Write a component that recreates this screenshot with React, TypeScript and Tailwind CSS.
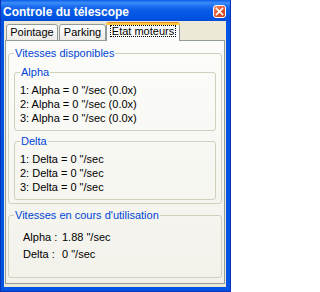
import React from "react";

const font = { fontFamily: '"Liberation Sans", Arial, sans-serif' };

const alphaRows = ["1: Alpha = 0 \"/sec (0.0x)", "2: Alpha = 0 \"/sec (0.0x)", "3: Alpha = 0 \"/sec (0.0x)"];
const deltaRows = ["1: Delta = 0 \"/sec", "2: Delta = 0 \"/sec", "3: Delta = 0 \"/sec"];

function CloseButton() {
  return (
    <div className="mt-[5px] w-[13px] h-[13px] rounded-[3px] border border-white bg-[linear-gradient(135deg,#f0937a_0%,#e3582f_45%,#c8401a_100%)] flex items-center justify-center">
      <svg width="11" height="11" viewBox="0 0 11 11">
        <path d="M2.5 2.5 L8.5 8.5 M8.5 2.5 L2.5 8.5" stroke="#fff" strokeWidth="1.7" strokeLinecap="square" />
      </svg>
    </div>
  );
}

function Group({ label, children, className = "" }: { label: string; children: React.ReactNode; className?: string }) {
  return (
    <fieldset className={`border border-[#d0d0bf] rounded-[3px] px-[5px] ${className}`}>
      <legend className="px-[1px] text-[11px] leading-[13px] text-[#0046d5]">{label}</legend>
      {children}
    </fieldset>
  );
}

export default function App() {
  return (
    <div
      style={font}
      className="w-[231px] h-[292px] flex flex-col bg-[#0054e3] border border-[#0a33b8] border-t-0 text-black overflow-hidden"
    >
      {/* caption */}
      <div className="h-[21px] -mx-px flex items-start justify-between pl-[3px] pr-[5px] bg-[linear-gradient(to_bottom,#0a5ce8_0%,#3d8ef8_14%,#1f70f2_28%,#0a5be6_50%,#0054e3_80%,#004bd9_100%)]">
        <span className="pt-[5px] text-[12px] leading-[15px] font-bold text-white">Controle du télescope</span>
        <CloseButton />
      </div>

      {/* body */}
      <div className="flex-1 ml-[3px] mr-[4px] mb-[4px] bg-[#ece9d8] pt-px pb-[3px] flex flex-col">
        <div className="h-[19px] pl-[2px] flex items-end text-[11px]">
          <div className="w-[52px] h-[17px] border border-[#919b9c] rounded-t-[3px] bg-[linear-gradient(to_bottom,#ffffff,#ecebe6)] flex items-center justify-center leading-[13px]">
            Pointage
          </div>
          <div className="ml-px w-[47px] h-[17px] border border-[#919b9c] rounded-t-[3px] bg-[linear-gradient(to_bottom,#ffffff,#ecebe6)] flex items-center justify-center leading-[13px]">
            Parking
          </div>
          <div className="relative z-10 w-[74px] h-[19px] border border-b-0 border-[#919b9c] border-t-[#e68b2c] rounded-t-[3px] bg-[#fcfcfc] flex flex-col">
            <div className="h-[2px] -mx-px bg-[#ffc73c]" />
            <div className="mx-[3px] h-[12px] border border-dotted border-black flex items-center justify-center leading-[10px]">
              Etat moteurs
            </div>
          </div>
        </div>

        <div className="flex-1 -mt-px mx-px border border-[#919b9c] bg-[linear-gradient(to_bottom,#fcfcfa,#f2f1ea)] text-[11px] leading-[14px]">
          <Group label="Vitesses disponibles" className="mx-[2px] mt-[6px] pb-[3px]">
            <Group label="Alpha" className="mt-[6px] pt-[4px] pb-[5px]">
              {alphaRows.map((r) => (
                <div key={r}>{r}</div>
              ))}
            </Group>
            <Group label="Delta" className="mt-[4px] pt-[4px] pb-[5px]">
              {deltaRows.map((r) => (
                <div key={r}>{r}</div>
              ))}
            </Group>
          </Group>

          <Group label="Vitesses en cours d'utilisation" className="mx-[2px] mt-[5px] pb-[16px]">
            <div className="pl-[9px] pt-[8px] grid grid-cols-[39px_auto] gap-y-[3px]">
              <span>Alpha :</span>
              <span>1.88 "/sec</span>
              <span>Delta :</span>
              <span>0 "/sec</span>
            </div>
          </Group>
        </div>
      </div>
    </div>
  );
}
